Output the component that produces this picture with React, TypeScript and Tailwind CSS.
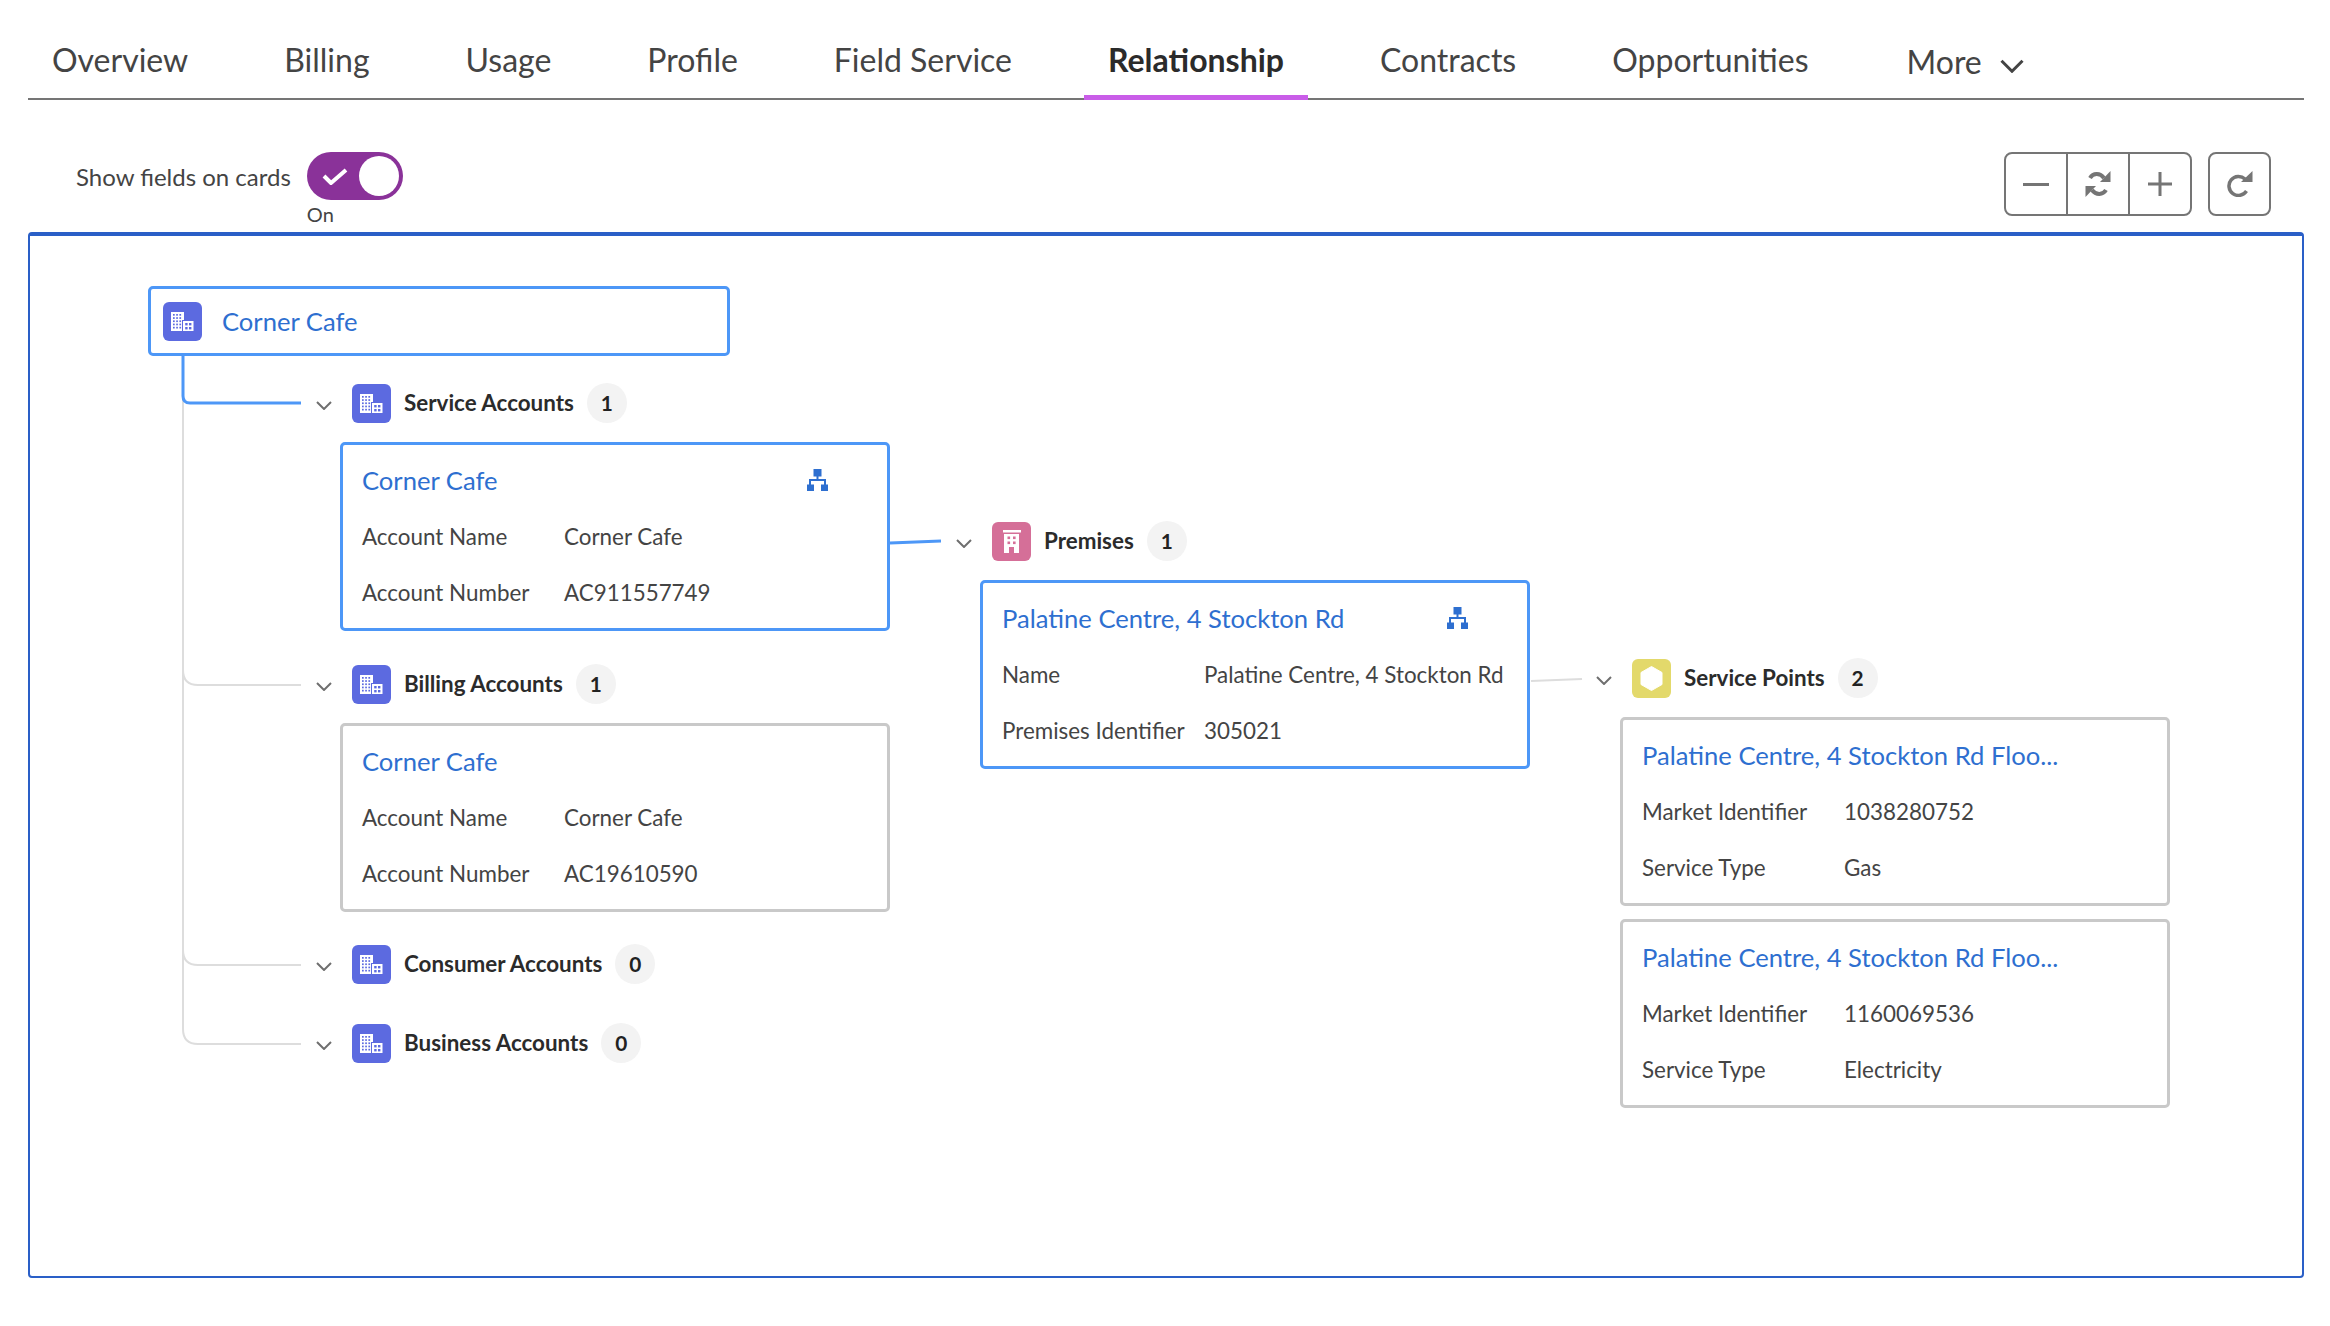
import type { ReactNode } from 'react';

const tabs = ['Overview', 'Billing', 'Usage', 'Profile', 'Field Service', 'Relationship', 'Contracts', 'Opportunities'];

function BuildingIcon() {
  return (
    <div className="w-[39px] h-[39px] shrink-0 rounded-[6px] bg-[#5c6ae0]">
      <svg viewBox="0 0 39 39" className="w-full h-full">
        <path d="M8 10h13v8h-2v11H8z" fill="#fff" />
        <rect x="20" y="19" width="10.500" height="10" fill="#fff" />
        <g fill="#5c6ae0">
          {[12, 15.200, 18.400, 21.600, 24.800].map((y) =>
            [10, 13.200, 16.400].map((x) => <rect key={`${x}-${y}`} x={x} y={y} width="1.700" height="1.700" />)
          )}
          <rect x="22.200" y="21" width="2.400" height="2.400" />
          <rect x="26" y="21" width="2.400" height="2.400" />
          <rect x="22.200" y="25" width="2.400" height="2.400" />
          <rect x="26" y="25" width="2.400" height="2.400" />
        </g>
      </svg>
    </div>
  );
}

function PremisesIcon() {
  return (
    <div className="w-[39px] h-[39px] shrink-0 rounded-[6px] bg-[#d56f98]">
      <svg viewBox="0 0 39 39" className="w-full h-full">
        <rect x="11" y="8" width="18" height="2.500" fill="#fff" />
        <path d="M12 12h15v19h-5v-6h-5v6h-5z" fill="#fff" />
        <g fill="#d56f98">
          <rect x="15.500" y="14.500" width="2.600" height="2.600" />
          <rect x="21" y="14.500" width="2.600" height="2.600" />
          <rect x="15.500" y="19.500" width="2.600" height="2.600" />
          <rect x="21" y="19.500" width="2.600" height="2.600" />
        </g>
      </svg>
    </div>
  );
}

function HexIcon() {
  return (
    <div className="w-[39px] h-[39px] shrink-0 rounded-[6px] bg-[#e3d96b]">
      <svg viewBox="0 0 39 39" className="w-full h-full">
        <path d="M19.500 7.500 30 13.500v12l-10.500 6L9 25.500v-12z" fill="#fff" stroke="#fff" strokeLinejoin="round" />
      </svg>
    </div>
  );
}

function Chevron({ className, width = 2 }: { className: string; width?: number }) {
  return (
    <svg viewBox="0 0 16 9" className={className} fill="none" stroke="currentColor" strokeWidth={width}>
      <path d="M1 1l7 7 7-7" />
    </svg>
  );
}

function HierarchyIcon() {
  return (
    <svg viewBox="0 0 21 22" className="w-[21px] h-[22px] shrink-0" fill="#2e6fd0">
      <rect x="6.500" y="0" width="8" height="7.500" />
      <rect x="0" y="15.500" width="7" height="6.500" />
      <rect x="14" y="15.500" width="7" height="6.500" />
      <path d="M3 16v-5h15v5M10.500 7v4" fill="none" stroke="#2e6fd0" strokeWidth="2" />
    </svg>
  );
}

function GroupRow({ className, icon, label, count }: { className: string; icon: ReactNode; label: string; count: number }) {
  return (
    <div className={`absolute flex items-center h-[40px] ${className}`}>
      <Chevron className="w-4 h-[9px] mt-[5px] mr-[20px] text-[#6f6f6f]" />
      {icon}
      <span className="ml-[13px] text-[22.4px] font-bold text-[#2b2b2b] leading-none">{label}</span>
      <span className="ml-[13px] w-[40px] h-[40px] rounded-full bg-[#f3f3f3] flex items-center justify-center text-[20.8px] font-bold text-[#222]">{count}</span>
    </div>
  );
}

function Card({ className, title, fields, selected, action }: { className: string; title: string; fields: [string, string][]; selected?: boolean; action?: boolean }) {
  return (
    <div className={`absolute w-[550px] h-[189px] rounded-[5px] border-[3px] bg-white pt-[6px] pl-[19px] ${selected ? 'border-[#4d97f7]' : 'border-[#c9c9c9]'} ${className}`}>
      <div className="flex items-center h-[58px]">
        <span className="text-[25.6px] text-[#2e6fd0]">{title}</span>
        {action && <span className="ml-auto mr-[59px]"><HierarchyIcon /></span>}
      </div>
      {fields.map(([name, value]) => (
        <div key={name} className="flex items-center h-[56px] text-[22.4px] text-[#444]">
          <span className="w-[202px] shrink-0">{name}</span>
          <span className="whitespace-nowrap">{value}</span>
        </div>
      ))}
    </div>
  );
}

export default function App() {
  return (
    <div className="min-h-[1326px] bg-white font-['Lato',sans-serif] text-[#444]">
      {/* Tabs */}
      <div className="flex h-[100px] ml-[28px] mr-[26px] gap-12 border-b-2 border-[#757575]">
        {tabs.map((tab) => (
          <div
            key={tab}
            className={`px-6 pt-[40px] text-[32px] leading-[40px] -mb-[2px] border-b-[5px] ${tab === 'Relationship' ? 'font-bold text-[#2b2b2b] border-[#c95de8]' : 'border-transparent'}`}
          >
            {tab}
          </div>
        ))}
        <div className="flex items-start pl-[26px] pt-[42px] text-[32px] leading-[40px]">
          More
          <Chevron className="w-[24px] h-[14px] ml-[18px] mt-[17px] text-[#444]" width={2} />
        </div>
      </div>

      {/* Toolbar */}
      <div className="flex justify-between h-[132px] pt-[52px] pl-[76px] pr-[59px]">
        <div className="flex items-start gap-4">
          <span className="h-[48px] mt-[1px] flex items-center text-[24px]">Show fields on cards</span>
          <div className="flex flex-col">
            <div className="flex items-center justify-between w-[96px] h-[48px] rounded-full bg-[#8a3299] pl-[15px] pr-[4px]">
              <svg viewBox="0 0 26 17" className="w-[26px] h-[17px]" fill="none" stroke="#fff" strokeWidth="4">
                <path d="M2 8l7 7L24 2" />
              </svg>
              <span className="w-[40px] h-[40px] rounded-full bg-white" />
            </div>
            <span className="text-[20px] leading-[30px] -mt-[1px]">On</span>
          </div>
        </div>
        <div className="flex gap-4 h-[64px]">
          <div className="flex rounded-[8px] border-2 border-[#757575] w-[188px]">
            <div className="flex-1 flex items-center justify-center border-r-2 border-[#757575]">
              <svg viewBox="0 0 26 3" className="w-[26px] h-[3px]"><rect width="26" height="3" fill="#757575" /></svg>
            </div>
            <div className="flex-1 flex items-center justify-center border-r-2 border-[#757575]">
              <svg viewBox="0 0 26 26" className="w-[26px] h-[26px]" fill="none" stroke="#757575" strokeWidth="4">
                <path d="M5 7C8 2 15 1.500 19 7" />
                <path d="M25.500 0v11H15z" fill="#757575" stroke="none" />
                <path d="M21 19C18 24 11 24.500 7 19" />
                <path d="M.5 26V15H11z" fill="#757575" stroke="none" />
              </svg>
            </div>
            <div className="flex-1 flex items-center justify-center">
              <svg viewBox="0 0 24 24" className="w-[24px] h-[24px]" fill="none" stroke="#757575" strokeWidth="3">
                <path d="M12 0v24M0 12h24" />
              </svg>
            </div>
          </div>
          <div className="flex items-center justify-center w-[63px] rounded-[8px] border-2 border-[#757575]">
            <svg viewBox="0 0 26 26" className="w-[26px] h-[26px]" fill="none" stroke="#757575" strokeWidth="3.500">
              <path d="M18 8A9.500 9.500 0 1 0 19.500 20" />
              <path d="M25.500 0v11H14z" fill="#757575" stroke="none" />
            </svg>
          </div>
        </div>
      </div>

      {/* Relationship canvas */}
      <div className="relative h-[1046px] ml-[28px] mr-[26px] rounded-[4px] border-2 border-t-4 border-[#2a5fc7] overflow-hidden">
        <svg className="absolute inset-0 w-full h-full" fill="none">
          <g transform="translate(-30 -236)">
            <g stroke="#dddddd" strokeWidth="2">
              <path d="M183 356V1029Q183 1044 198 1044H301" />
              <path d="M183 670Q183 685 198 685H301" />
              <path d="M183 950Q183 965 198 965H301" />
              <path d="M1531 681L1582 679" />
            </g>
            <path d="M183 356V396Q183 403 190 403H301" stroke="#4d97f7" strokeWidth="3" />
            <path d="M890 543L941 541" stroke="#4d97f7" strokeWidth="3" />
          </g>
        </svg>

        <div className="absolute left-[118px] top-[50px] w-[582px] h-[70px] rounded-[5px] border-[3px] border-[#4d97f7] bg-white flex items-center pl-[12px]">
          <BuildingIcon />
          <span className="ml-[20px] text-[25.6px] text-[#2e6fd0]">Corner Cafe</span>
        </div>

        <GroupRow className="left-[286px] top-[147px]" icon={<BuildingIcon />} label="Service Accounts" count={1} />
        <Card className="left-[310px] top-[206px]" title="Corner Cafe" selected action fields={[['Account Name', 'Corner Cafe'], ['Account Number', 'AC911557749']]} />

        <GroupRow className="left-[286px] top-[428px]" icon={<BuildingIcon />} label="Billing Accounts" count={1} />
        <Card className="left-[310px] top-[487px]" title="Corner Cafe" fields={[['Account Name', 'Corner Cafe'], ['Account Number', 'AC19610590']]} />

        <GroupRow className="left-[286px] top-[708px]" icon={<BuildingIcon />} label="Consumer Accounts" count={0} />
        <GroupRow className="left-[286px] top-[787px]" icon={<BuildingIcon />} label="Business Accounts" count={0} />

        <GroupRow className="left-[926px] top-[285px]" icon={<PremisesIcon />} label="Premises" count={1} />
        <Card className="left-[950px] top-[344px]" title="Palatine Centre, 4 Stockton Rd" selected action fields={[['Name', 'Palatine Centre, 4 Stockton Rd'], ['Premises Identifier', '305021']]} />

        <GroupRow className="left-[1566px] top-[422px]" icon={<HexIcon />} label="Service Points" count={2} />
        <Card className="left-[1590px] top-[481px]" title="Palatine Centre, 4 Stockton Rd Floo..." fields={[['Market Identifier', '1038280752'], ['Service Type', 'Gas']]} />
        <Card className="left-[1590px] top-[683px]" title="Palatine Centre, 4 Stockton Rd Floo..." fields={[['Market Identifier', '1160069536'], ['Service Type', 'Electricity']]} />
      </div>
    </div>
  );
}
